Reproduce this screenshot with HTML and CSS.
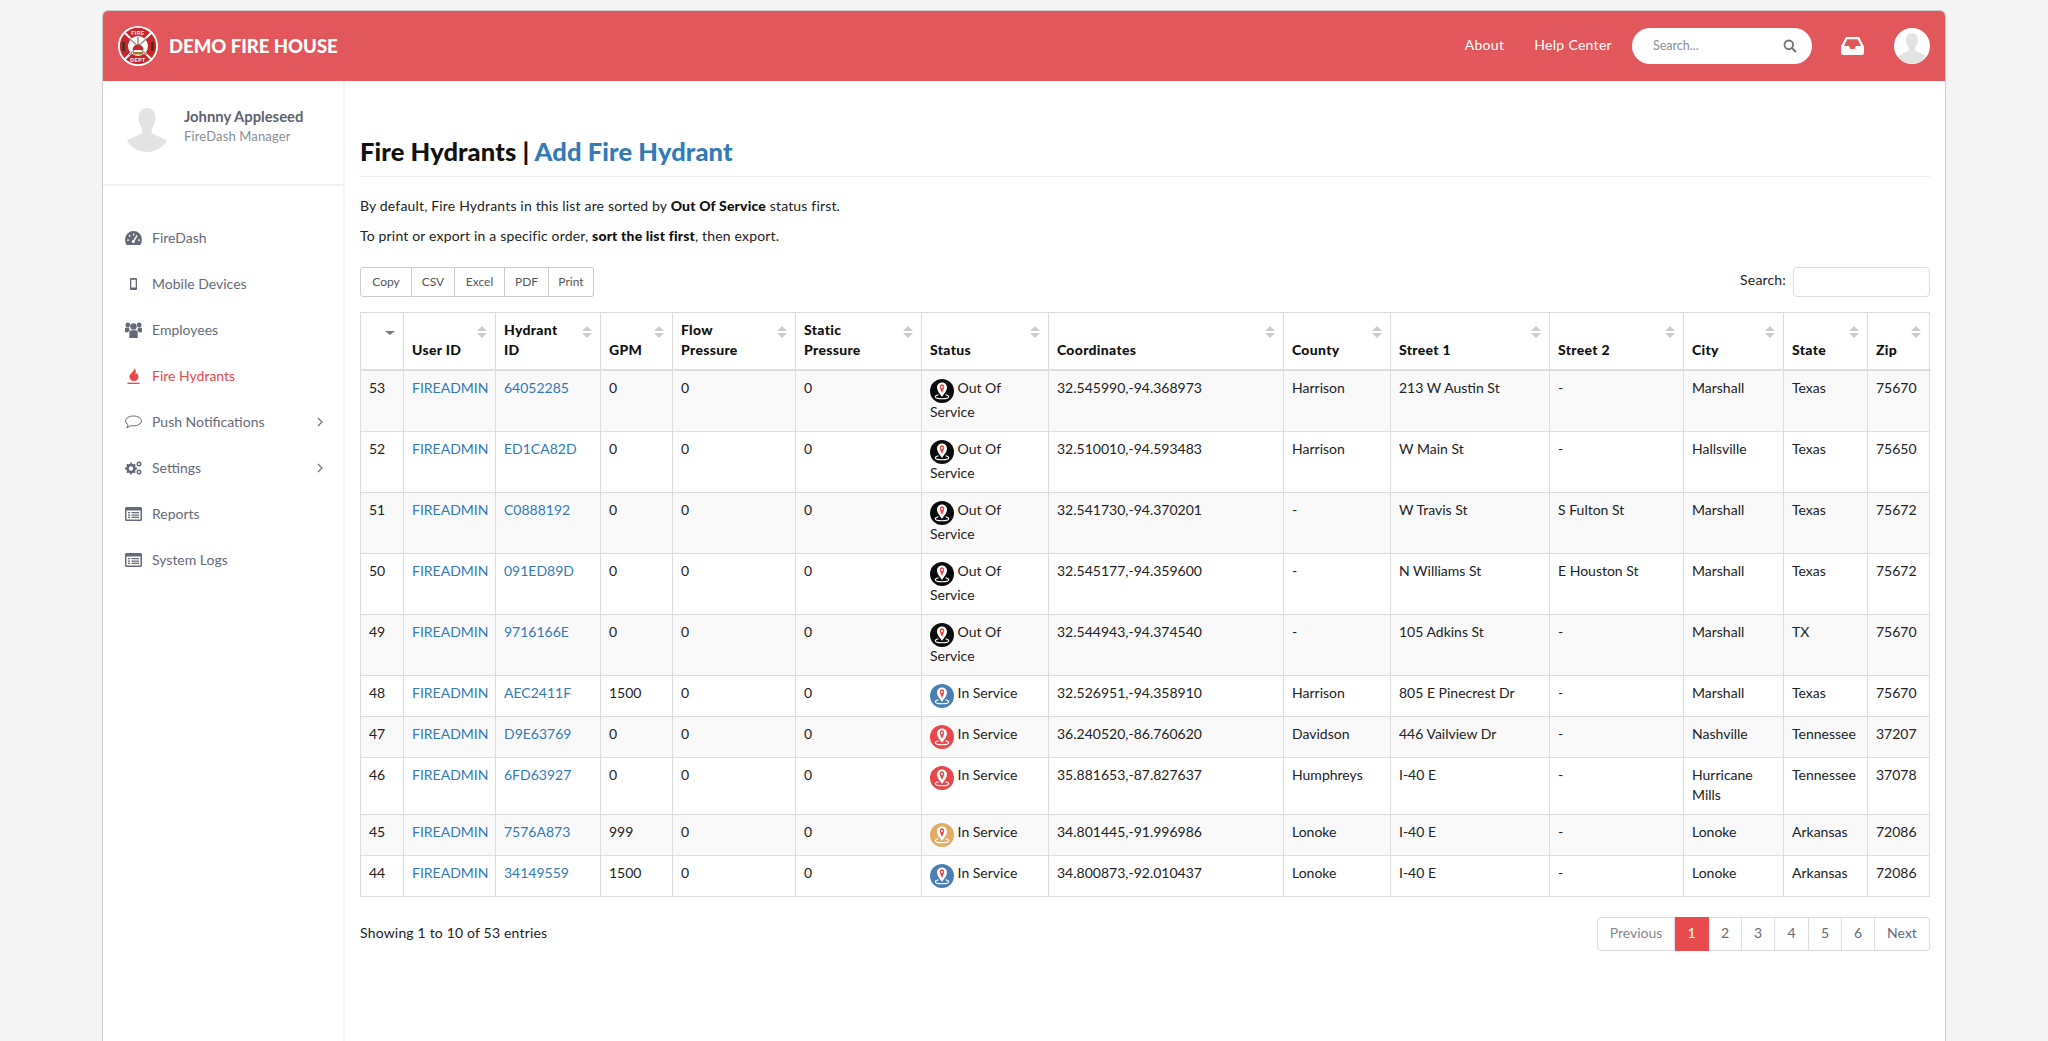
FILE: index.html
```html
<!DOCTYPE html>
<html lang="en">
<head>
<meta charset="utf-8">
<title>Fire Hydrants</title>
<link rel="stylesheet" href="styles.css">
</head>
<body>
<svg class="defs" width="0" height="0">
  <defs>
    <symbol id="pin" viewBox="0 0 24 24">
      <path d="M12 3.600c-2.900 0-5 2.200-5 5 0 3.400 3.200 6.600 5 9.400 1.800-2.800 5-6 5-9.400 0-2.800-2.100-5-5-5z" fill="#fff"/>
      <path d="M12 5.200c-1.300 0-2.200 1-2.200 2.300 0 1.800 1.300 4.300 2.200 6.500 .9-2.200 2.200-4.700 2.200-6.500 0-1.300-.9-2.300-2.200-2.300z" fill="#e8474c"/>
      <circle cx="12" cy="8" r="1" fill="#fff"/>
      <path d="M8.500 15.800c-2 .4-3.200 1.100-3.200 2 0 1.200 3 2 6.700 2s6.700-.8 6.700-2c0-.9-1.200-1.600-3.200-2" fill="none" stroke="#fff" stroke-width="1.100"/>
    </symbol>
    <symbol id="sort" viewBox="0 0 10 12">
      <path d="M5 0l5 5H0zM5 12L0 7h10z" fill="#ccc"/>
    </symbol>
    <symbol id="person" viewBox="0 0 40 44">
      <path d="M20 0c-5.500 0-8.500 4-8.500 10 0 4.500 1.800 8 3.800 10.500v4.500c-3.500 2.500-10.300 4-15.300 8 3.500 5.500 11 11 20 11s16.500-5.500 20-11c-5-4-11.800-5.500-15.300-8v-4.500c2-2.500 3.800-6 3.800-10.500C28.500 4 25.500 0 20 0z" fill="#e3e3e3"/>
    </symbol>
    <symbol id="chev" viewBox="0 0 6 10">
      <path d="M1 1l4 4-4 4" fill="none" stroke="#6a6e7b" stroke-width="1.100"/>
    </symbol>
    <symbol id="list" viewBox="0 0 17 14">
      <path d="M1.500 0h14A1.500 1.500 0 0 1 17 1.500v11a1.500 1.500 0 0 1-1.500 1.500h-14A1.500 1.500 0 0 1 0 12.500v-11A1.500 1.500 0 0 1 1.500 0zM1.500 3.500v9h14v-9zM3 5h2v1.300H3zm3.500 0H14v1.300H6.500zM3 7.400h2v1.300H3zm3.500 0H14v1.300H6.500zM3 9.800h2v1.300H3zm3.500 0H14v1.300H6.500z" fill="#666a78" fill-rule="evenodd"/>
    </symbol>
  </defs>
</svg>
<div class="app">
  <header class="topbar">
    <div class="brand">
      <svg class="logo" viewBox="0 0 40 40">
        <circle cx="20" cy="20" r="20" fill="#fff"/>
        <circle cx="20" cy="20" r="18.200" fill="#c8262b"/>
        <path d="M6 6l28 28M34 6L6 34" stroke="#fff" stroke-width="2"/>
        <circle cx="20" cy="20" r="10" fill="#fff"/>
        <path d="M11 12l18 17M29 12L11 29" stroke="#8f8f8f" stroke-width="1.200"/>
        <path d="M14.500 24a5.500 5.500 0 0 1 11 0z" fill="#c8262b"/>
        <path d="M19.500 11h1v13h-1z" fill="#7a4a22"/>
        <path d="M15 26h10v2.500H15z" fill="#a8792f"/>
        <path d="M4 16h3v9H4zM33 16h3v9h-3z" fill="#5c2a1c"/>
        <text class="logo-text" x="20" y="8.500" text-anchor="middle">FIRE</text>
        <text class="logo-text" x="20" y="36" text-anchor="middle">DEPT</text>
      </svg>
      <span class="brand-name">DEMO FIRE HOUSE</span>
    </div>
    <nav class="topnav">
      <a class="toplink" href="#">About</a>
      <a class="toplink" href="#">Help Center</a>
      <div class="topsearch">
        <span class="topsearch-text">Search...</span>
        <svg class="topsearch-icon" viewBox="0 0 14 14"><circle cx="5.800" cy="5.800" r="4.300" fill="none" stroke="#6f7380" stroke-width="1.800"/><path d="M9 9l4 4" stroke="#6f7380" stroke-width="2"/></svg>
      </div>
      <svg class="inbox" viewBox="0 0 23 18"><path d="M5 0h13l5 9.500V16a2 2 0 0 1-2 2H2a2 2 0 0 1-2-2V9.500zM6.200 2.300L3 9h5l1.500 3h4L15 9h5l-3.200-6.700z" fill="#fff" fill-rule="evenodd"/></svg>
      <div class="useravatar"><svg class="useravatar-img" viewBox="0 0 40 44"><use href="#person"/></svg></div>
    </nav>
  </header>
  <div class="body">
    <aside class="sidebar">
      <div class="profile">
        <svg class="profile-img" viewBox="0 0 40 44"><use href="#person"/></svg>
        <div class="profile-text">
          <div class="profile-name">Johnny Appleseed</div>
          <div class="profile-role">FireDash Manager</div>
        </div>
      </div>
      <ul class="menu">
        <li class="menu-item"><svg class="menu-icon" viewBox="0 0 17 14"><path d="M8.500 0A8.500 8.500 0 0 0 0 8.500c0 2 .6 3.800 1.700 5.500h13.600c1.100-1.700 1.700-3.500 1.700-5.500A8.500 8.500 0 0 0 8.500 0zM8 2.500h1.200v2H8zM3.500 4.500l1-.8 1.200 1.600-1 .8zM2 8.500h2v1.200H2zm11 0h2v1.200h-2zM11.500 4l1.200.8-3 5a1.500 1.500 0 1 1-1.200-.8z" fill="#666a78" fill-rule="evenodd"/></svg><span class="menu-label">FireDash</span></li>
        <li class="menu-item"><svg class="menu-icon" viewBox="0 0 17 14"><path d="M6 1h5a1 1 0 0 1 1 1v10a1 1 0 0 1-1 1H6a1 1 0 0 1-1-1V2a1 1 0 0 1 1-1zm.300 1.800v7.800h4.400V2.800z" fill="#666a78" fill-rule="evenodd"/></svg><span class="menu-label">Mobile Devices</span></li>
        <li class="menu-item"><svg class="menu-icon" viewBox="0 0 17 16"><circle cx="8.500" cy="4.500" r="3.200" fill="#666a78"/><circle cx="2.800" cy="2.900" r="2.400" fill="#666a78"/><circle cx="14.200" cy="2.900" r="2.400" fill="#666a78"/><path d="M4.300 10c0-1.100 1-1.800 2.200-1.800h4c1.200 0 2.200.7 2.200 1.800v6H4.300zM0 7c0-1 .8-1.500 1.700-1.500h2.200c0 1.100.4 1.800 1.100 2.400-1 .5-1.600 1.300-1.600 2.400H0zm17 0c0-1-.8-1.500-1.700-1.500h-2.200c0 1.100-.4 1.800-1.100 2.400 1 .5 1.600 1.300 1.600 2.400H17z" fill="#666a78"/></svg><span class="menu-label">Employees</span></li>
        <li class="menu-item menu-item-active"><svg class="menu-icon" viewBox="0 0 17 16"><path d="M9.500 0c.8 3-5 5-5 8.800 0 2.600 2 4.200 4.500 4.200s4.500-1.700 4.500-4.200c0-1.500-1-2.500-1.500-4-.5 1-1 1.500-1.500 1.500C11 4 11 1.500 9.500 0z" fill="#e8474c"/><path d="M2.500 14.700h12V16h-12z" fill="#e8474c"/></svg><span class="menu-label">Fire Hydrants</span></li>
        <li class="menu-item"><svg class="menu-icon" viewBox="0 0 17 14"><path d="M8.500 1C4 1 .6 3.200.6 6c0 1.500 1 2.800 2.500 3.700-.1.900-.6 2-1.500 2.800 1.700-.2 3.300-1 4.300-1.900.8.100 1.600.2 2.600.2 4.500 0 7.900-2.100 7.900-4.800S13 1 8.500 1z" fill="none" stroke="#666a78" stroke-width="1"/></svg><span class="menu-label">Push Notifications</span><svg class="menu-chev" viewBox="0 0 6 10"><use href="#chev"/></svg></li>
        <li class="menu-item"><svg class="menu-icon" viewBox="0 0 17 14"><circle cx="6" cy="7.500" r="3.500" fill="none" stroke="#666a78" stroke-width="2.600"/><path d="M6 1.500v2M6 11.500v2M0 7.500h2M10 7.500h2M1.800 3.300l1.400 1.400M8.800 10.300l1.400 1.400M1.800 11.700l1.400-1.400M8.800 4.700l1.400-1.400" stroke="#666a78" stroke-width="1.800"/><circle cx="14" cy="3" r="1.800" fill="none" stroke="#666a78" stroke-width="1.400"/><circle cx="14" cy="11" r="1.800" fill="none" stroke="#666a78" stroke-width="1.400"/></svg><span class="menu-label">Settings</span><svg class="menu-chev" viewBox="0 0 6 10"><use href="#chev"/></svg></li>
        <li class="menu-item"><svg class="menu-icon" viewBox="0 0 17 14"><use href="#list"/></svg><span class="menu-label">Reports</span></li>
        <li class="menu-item"><svg class="menu-icon" viewBox="0 0 17 14"><use href="#list"/></svg><span class="menu-label">System Logs</span></li>
      </ul>
    </aside>
    <main class="content">
      <h1 class="page-title">Fire Hydrants | <a class="page-title-link" href="#">Add Fire Hydrant</a></h1>
      <p class="note">By default, Fire Hydrants in this list are sorted by <strong>Out Of Service</strong> status first.</p>
      <p class="note">To print or export in a specific order, <strong>sort the list first</strong>, then export.</p>
      <div class="toolbar">
        <div class="btn-group">
          <button class="btn btn-copy">Copy</button><button class="btn btn-csv">CSV</button><button class="btn btn-excel">Excel</button><button class="btn btn-pdf">PDF</button><button class="btn btn-print">Print</button>
        </div>
        <label class="table-search">Search: <span class="table-search-input"></span></label>
      </div>
      <table class="grid">
        <colgroup>
          <col class="c1"><col class="c2"><col class="c3"><col class="c4"><col class="c5"><col class="c6"><col class="c7"><col class="c8"><col class="c9"><col class="c10"><col class="c11"><col class="c12"><col class="c13"><col class="c14">
        </colgroup>
        <thead>
          <tr>
            <th><svg class="sort-down" viewBox="0 0 10 4"><path d="M0 0h10L5 4z" fill="#777"/></svg></th>
            <th>User ID<svg class="sort"><use href="#sort"/></svg></th>
            <th>Hydrant<br>ID<svg class="sort"><use href="#sort"/></svg></th>
            <th>GPM<svg class="sort"><use href="#sort"/></svg></th>
            <th>Flow<br>Pressure<svg class="sort"><use href="#sort"/></svg></th>
            <th>Static<br>Pressure<svg class="sort"><use href="#sort"/></svg></th>
            <th>Status<svg class="sort"><use href="#sort"/></svg></th>
            <th>Coordinates<svg class="sort"><use href="#sort"/></svg></th>
            <th>County<svg class="sort"><use href="#sort"/></svg></th>
            <th>Street 1<svg class="sort"><use href="#sort"/></svg></th>
            <th>Street 2<svg class="sort"><use href="#sort"/></svg></th>
            <th>City<svg class="sort"><use href="#sort"/></svg></th>
            <th>State<svg class="sort"><use href="#sort"/></svg></th>
            <th>Zip<svg class="sort"><use href="#sort"/></svg></th>
          </tr>
        </thead>
        <tbody>
          <tr><td>53</td><td><a href="#">FIREADMIN</a></td><td><a href="#">64052285</a></td><td>0</td><td>0</td><td>0</td><td><svg class="pin pin-black"><use href="#pin"/></svg> Out Of Service</td><td>32.545990,-94.368973</td><td>Harrison</td><td>213 W Austin St</td><td>-</td><td>Marshall</td><td>Texas</td><td>75670</td></tr>
          <tr><td>52</td><td><a href="#">FIREADMIN</a></td><td><a href="#">ED1CA82D</a></td><td>0</td><td>0</td><td>0</td><td><svg class="pin pin-black"><use href="#pin"/></svg> Out Of Service</td><td>32.510010,-94.593483</td><td>Harrison</td><td>W Main St</td><td>-</td><td>Hallsville</td><td>Texas</td><td>75650</td></tr>
          <tr><td>51</td><td><a href="#">FIREADMIN</a></td><td><a href="#">C0888192</a></td><td>0</td><td>0</td><td>0</td><td><svg class="pin pin-black"><use href="#pin"/></svg> Out Of Service</td><td>32.541730,-94.370201</td><td>-</td><td>W Travis St</td><td>S Fulton St</td><td>Marshall</td><td>Texas</td><td>75672</td></tr>
          <tr><td>50</td><td><a href="#">FIREADMIN</a></td><td><a href="#">091ED89D</a></td><td>0</td><td>0</td><td>0</td><td><svg class="pin pin-black"><use href="#pin"/></svg> Out Of Service</td><td>32.545177,-94.359600</td><td>-</td><td>N Williams St</td><td>E Houston St</td><td>Marshall</td><td>Texas</td><td>75672</td></tr>
          <tr><td>49</td><td><a href="#">FIREADMIN</a></td><td><a href="#">9716166E</a></td><td>0</td><td>0</td><td>0</td><td><svg class="pin pin-black"><use href="#pin"/></svg> Out Of Service</td><td>32.544943,-94.374540</td><td>-</td><td>105 Adkins St</td><td>-</td><td>Marshall</td><td>TX</td><td>75670</td></tr>
          <tr><td>48</td><td><a href="#">FIREADMIN</a></td><td><a href="#">AEC2411F</a></td><td>1500</td><td>0</td><td>0</td><td><svg class="pin pin-blue"><use href="#pin"/></svg> In Service</td><td>32.526951,-94.358910</td><td>Harrison</td><td>805 E Pinecrest Dr</td><td>-</td><td>Marshall</td><td>Texas</td><td>75670</td></tr>
          <tr><td>47</td><td><a href="#">FIREADMIN</a></td><td><a href="#">D9E63769</a></td><td>0</td><td>0</td><td>0</td><td><svg class="pin pin-red"><use href="#pin"/></svg> In Service</td><td>36.240520,-86.760620</td><td>Davidson</td><td>446 Vailview Dr</td><td>-</td><td>Nashville</td><td>Tennessee</td><td>37207</td></tr>
          <tr><td>46</td><td><a href="#">FIREADMIN</a></td><td><a href="#">6FD63927</a></td><td>0</td><td>0</td><td>0</td><td><svg class="pin pin-red"><use href="#pin"/></svg> In Service</td><td>35.881653,-87.827637</td><td>Humphreys</td><td>I-40 E</td><td>-</td><td>Hurricane Mills</td><td>Tennessee</td><td>37078</td></tr>
          <tr><td>45</td><td><a href="#">FIREADMIN</a></td><td><a href="#">7576A873</a></td><td>999</td><td>0</td><td>0</td><td><svg class="pin pin-orange"><use href="#pin"/></svg> In Service</td><td>34.801445,-91.996986</td><td>Lonoke</td><td>I-40 E</td><td>-</td><td>Lonoke</td><td>Arkansas</td><td>72086</td></tr>
          <tr><td>44</td><td><a href="#">FIREADMIN</a></td><td><a href="#">34149559</a></td><td>1500</td><td>0</td><td>0</td><td><svg class="pin pin-blue"><use href="#pin"/></svg> In Service</td><td>34.800873,-92.010437</td><td>Lonoke</td><td>I-40 E</td><td>-</td><td>Lonoke</td><td>Arkansas</td><td>72086</td></tr>
        </tbody>
      </table>
      <div class="table-foot">
        <div class="entries">Showing 1 to 10 of 53 entries</div>
        <div class="pager">
          <a class="page page-prev" href="#">Previous</a><a class="page page-on" href="#">1</a><a class="page page-n2" href="#">2</a><a class="page page-n3" href="#">3</a><a class="page page-n4" href="#">4</a><a class="page page-n5" href="#">5</a><a class="page page-n6" href="#">6</a><a class="page page-next" href="#">Next</a>
        </div>
      </div>
    </main>
  </div>
</div>
</body>
</html>
```
FILE: styles.css
```css
* { box-sizing: border-box; }
html, body { height: 100%; }
body {
  margin: 0;
  background: #f4f4f4;
  font-family: "Lato", "Noto Sans", sans-serif;
  font-size: 14px;
  line-height: 20px;
  color: #222;
  overflow: hidden;
}
a { color: #337ab7; text-decoration: none; }
.defs { display: block; height: 0; }

.app {
  width: 1844px;
  height: 1031px;
  margin: 10px 0 0 102px;
  background: #fff;
  border: 1px solid #ccc;
  border-bottom: 0;
  border-radius: 6px 6px 0 0;
  display: flex;
  flex-direction: column;
  overflow: hidden;
}

.topbar {
  height: 70px;
  flex: none;
  background: #e2575b;
  display: flex;
  align-items: center;
  justify-content: space-between;
  padding: 0 15px 0 15px;
}
.brand { display: flex; align-items: center; gap: 11px; }
.logo { width: 40px; height: 40px; display: block; }
.logo-text { font-size: 5px; font-weight: 700; fill: #fff; letter-spacing: .5px; font-family: "Liberation Sans", sans-serif; }
.brand-name { color: #fff; font-size: 18.500px; font-weight: 900; white-space: nowrap; }
.topnav { display: flex; align-items: center; }
.toplink { color: #fff; font-size: 14px; letter-spacing: .3px; margin-right: 30px; padding-bottom: 2px; white-space: nowrap; }
.topsearch {
  width: 180px;
  height: 36px;
  border-radius: 18px;
  background: #fff;
  display: flex;
  align-items: center;
  justify-content: space-between;
  padding: 0 15px 0 21px;
  margin-left: -10px;
}
.topsearch-text { color: #8c8f98; font-size: 12.500px; }
.topsearch-icon { width: 14px; height: 14px; }
.inbox { width: 23px; height: 18px; margin-left: 29px; }
.useravatar {
  width: 36px;
  height: 36px;
  border-radius: 50%;
  background: #fff;
  margin-left: 30px;
  overflow: hidden;
  display: flex;
  justify-content: center;
  align-items: flex-end;
}
.useravatar-img { width: 28px; height: 31px; display: block; }

.body { flex: 1; display: flex; min-height: 0; }
.sidebar {
  width: 240px;
  flex: none;
}
.profile {
  height: 105px;
  border-bottom: 2px solid #f1f1f1;
  display: flex;
  align-items: flex-start;
  padding: 27px 0 0 24px;
}
.profile-img { width: 40px; height: 44px; flex: none; }
.profile-text { margin-left: 17px; margin-top: -2px; }
.profile-name { font-size: 14.800px; font-weight: 700; color: #5f6370; line-height: 20px; }
.profile-role { font-size: 13px; letter-spacing: .15px; color: #8a8d96; line-height: 20px; }
.menu { list-style: none; margin: 29px 0 0; padding: 0; }
.menu-item {
  height: 46px;
  display: flex;
  align-items: center;
  padding: 0 20px 0 22px;
  color: #666a78;
}
.menu-icon { width: 17px; height: 16px; flex: none; }
.menu-label { margin-left: 10px; flex: 1; white-space: nowrap; }
.menu-item-active { color: #e8474c; }
.menu-chev { width: 6px; height: 10px; flex: none; }

.content {
  flex: 1;
  min-width: 0;
  border-left: 2px solid #f4f4f4;
  padding: 0 15px 0 15px;
}
.page-title {
  margin: 54px 0 0;
  padding-bottom: 9px;
  font-size: 25.500px;
  letter-spacing: .1px;
  line-height: 32px;
  font-weight: 900;
  color: #111;
  border-bottom: 1px solid #eee;
}
.page-title-link { color: #337ab7; }
.note { margin: 0 0 10px; letter-spacing: .17px; }
.page-title + .note { margin-top: 19px; }
.note strong { font-weight: 900; color: #111; }

.toolbar {
  display: flex;
  justify-content: space-between;
  align-items: center;
  margin-top: 21px;
  height: 30px;
}
.btn-group { display: flex; }
.btn {
  height: 30px;
  font: inherit;
  font-size: 12px;
  color: #555;
  background: #fff;
  border: 1px solid #ccc;
  border-left: 0;
  padding: 0;
}
.btn-copy { width: 52px; border-left: 1px solid #ccc; border-radius: 3px 0 0 3px; }
.btn-csv { width: 43px; }
.btn-excel { width: 50px; }
.btn-pdf { width: 44px; }
.btn-print { width: 45px; border-radius: 0 3px 3px 0; }
.table-search { display: flex; align-items: flex-start; gap: 7px; line-height: 26px; letter-spacing: .17px; }
.table-search-input {
  width: 137px;
  height: 30px;
  border: 1px solid #ddd;
  border-radius: 4px;
  background: #fff;
}

.grid {
  table-layout: fixed;
  border-collapse: collapse;
  width: 1569px;
  margin-top: 15px;
}
.c1 { width: 43px; }
.c2 { width: 92px; }
.c3 { width: 105px; }
.c4 { width: 72px; }
.c5 { width: 123px; }
.c6 { width: 126px; }
.c7 { width: 127px; }
.c8 { width: 235px; }
.c9 { width: 107px; }
.c10 { width: 159px; }
.c11 { width: 134px; }
.c12 { width: 100px; }
.c13 { width: 84px; }
.c14 { width: 62px; }
.grid th, .grid td { border: 1px solid #ddd; padding: 7px 8px 9px; vertical-align: top; }
.grid th {
  position: relative;
  vertical-align: bottom;
  text-align: left;
  font-weight: 900;
  letter-spacing: .3px;
  color: #111;
  padding-right: 22px;
  border-bottom-width: 2px;
}
.grid tbody tr:nth-child(odd) { background: #f9f9f9; }
.sort {
  position: absolute;
  top: 13px;
  right: 8px;
  width: 10px;
  height: 12px;
}
.sort-down { position: absolute; top: 18px; right: 8px; width: 10px; height: 4px; }
.pin { width: 24px; height: 24px; vertical-align: top; border-radius: 50%; margin-top: 1px; margin-bottom: -1px; }
.pin-black { background: #0b0b0b; }
.pin-blue { background: #4a7fb5; }
.pin-red { background: #e8474c; }
.pin-orange { background: #e2ac64; }

.table-foot {
  display: flex;
  justify-content: space-between;
  align-items: center;
  margin-top: 20px;
}
.entries { letter-spacing: .18px; padding-bottom: 2px; }
.pager { display: flex; }
.page {
  height: 34px;
  border: 1px solid #ddd;
  border-left: 0;
  color: #666a78;
  display: flex;
  align-items: center;
  justify-content: center;
  padding-bottom: 2px;
}
.page-prev { width: 78px; border-left: 1px solid #ddd; border-radius: 4px 0 0 4px; color: #888; }
.page-on { width: 34px; background: #e84c4f; border-color: #e84c4f; color: #fff; }
.page-n2 { width: 33px; }
.page-n3 { width: 33px; }
.page-n4 { width: 34px; }
.page-n5 { width: 33px; }
.page-n6 { width: 33px; }
.page-next { width: 55px; border-radius: 0 4px 4px 0; }
```
